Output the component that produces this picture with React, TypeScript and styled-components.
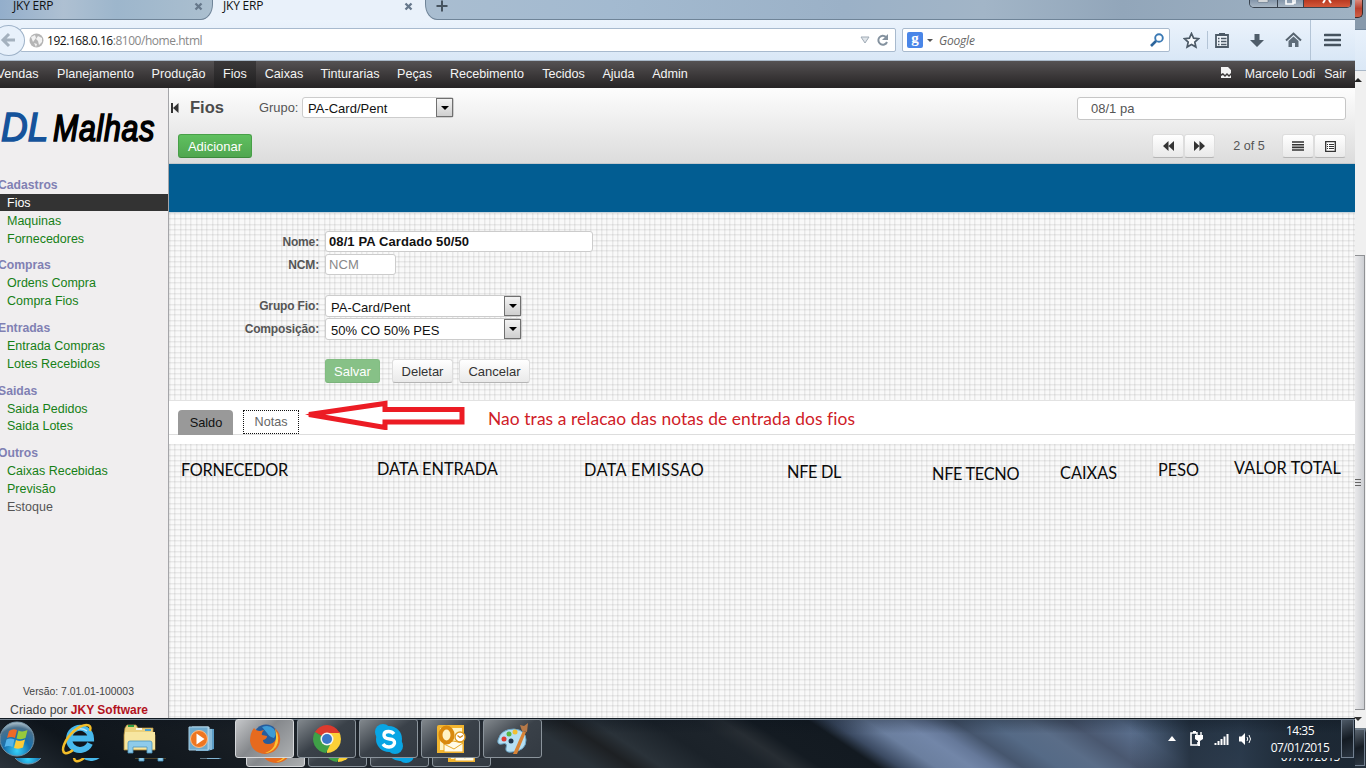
import React from "react";
import styled, { createGlobalStyle, css } from "styled-components";

const Global = createGlobalStyle`
  *{box-sizing:border-box}
  body{margin:0;overflow:hidden;background:#fff}
  #root{font-family:"Liberation Sans",Arial,sans-serif;font-size:13px;color:#444}
`;
const ui = `"Open Sans","Noto Sans",sans-serif`;

const Screen = styled.div`display:flex;width:1366px;height:768px;overflow:hidden;`;
const Window = styled.div`display:flex;flex-direction:column;width:1355px;height:768px;`;

/* browser chrome */
const TabStrip = styled.div`display:flex;height:20px;background:#e9f1fa;font:12px ${ui};color:#111;flex:none;`;
const BackTab = styled.div`
  width:213px;height:20px;display:flex;justify-content:space-between;align-items:flex-start;padding:0 9px 0 13px;
  background:linear-gradient(90deg,#93aecb,#aec0d2 30%,#9db6cc 55%,#abbfcf);
  border-right:1px solid #6f8498;border-bottom:1px solid #6f8498;border-bottom-right-radius:12px 16px;
`;
const FrontTab = styled.div`width:212px;display:flex;justify-content:space-between;align-items:flex-start;padding:0 12px 0 10px;`;
const TabTitle = styled.span`line-height:16px;margin-top:-2px;letter-spacing:-.2px;`;
const TabClose = styled.svg`width:9px;height:9px;margin-top:2px;`;
const StripRest = styled.div`
  flex:1;display:flex;justify-content:space-between;padding-left:10px;
  background:linear-gradient(90deg,#a9bdd0,#a3bad0 20%,#9bb1c7 45%,#a2b5c7 60%,#92a6ba 75%,#9fb2c3);
  border-left:1px solid #6f8498;border-bottom:1px solid #6f8498;border-bottom-left-radius:12px 16px;
`;
const WindowButtons = styled.div`
  display:flex;width:103px;height:8px;margin-right:3px;border:1px solid #39434f;border-top:0;border-radius:0 0 5px 5px;overflow:hidden;
`;
const WindowButton = styled.div<{ $w: number; $close?: boolean }>`
  width:${p => p.$w}px;display:flex;justify-content:center;border-right:1px solid #39434f;
  background:${p => (p.$close ? "linear-gradient(#b93a22,#d4583a)" : "linear-gradient(#8496aa,#a9b7c5)")};
`;
const Toolbar = styled.div`
  height:41px;flex:none;display:flex;align-items:center;background:linear-gradient(#ebf3fc,#d9e7f6);
  border-bottom:1px solid #a9b9c9;font:12px ${ui};
`;
const Back = styled.div`
  width:33px;height:31px;margin-left:-8px;border:1px solid #9eb2c8;border-radius:50%;background:#e8f1fb;display:flex;align-items:center;
  justify-content:flex-end;padding-right:8px;z-index:1;flex:none;
`;
const Address = styled.div`
  width:876px;height:24px;margin-left:-5px;padding:0 6px 0 8px;background:#fff;border:1px solid #a8bace;border-radius:2px;
  display:flex;align-items:center;color:#888;flex:none;
`;
const Url = styled.span`margin-left:3px;flex:1;letter-spacing:-.46px;b{font-weight:400;color:#111;}`;
const Search = styled.div`
  width:268px;height:24px;margin-left:6px;padding:0 5px 0 4px;background:#fff;border:1px solid #a8bace;border-radius:2px;display:flex;
  align-items:center;flex:none;
`;
const GBadge = styled.span`width:16px;height:16px;border-radius:2px;background:#4a86e8;color:#fff;font:bold 15px/13px "Liberation Serif",serif;text-align:center;`;
const SearchHint = styled.i`flex:1;margin-left:3px;color:#666;letter-spacing:-.2px;`;
const Tools = styled.div`flex:1;height:40px;display:flex;align-items:center;`;
const ToolCell = styled.div<{ $w: number; $line?: boolean }>`
  width:${p => p.$w}px;height:${p => (p.$line ? 40 : 20)}px;display:flex;align-items:center;justify-content:center;
  ${p => p.$line && css`border-left:1px solid #b3c4d6;`}
`;
const Divider = styled.div`width:1px;height:18px;background:#b3c4d6;`;

/* application */
const Nav = styled.nav`
  height:27px;flex:none;display:flex;align-items:center;background:linear-gradient(#555253,#3d3a3b 50%,#262425);color:#f4f4f4;
  font-size:12.6px;overflow:hidden;
`;
const NavItem = styled.a<{ $w: number; $on?: boolean }>`
  width:${p => p.$w}px;height:27px;line-height:26px;text-align:center;white-space:nowrap;flex:none;
  ${p => p.$on && css`background:linear-gradient(#3b393a,#1f1e1f);`}
`;
const NavUser = styled.div`margin-left:auto;display:flex;align-items:center;padding-right:9px;line-height:25px;margin-top:-1px;font-size:12.3px;span{margin-left:9px;}svg{margin:-3px 4px 0 0;}`;
const Body = styled.div`display:flex;height:630px;flex:none;`;
const Sidebar = styled.aside`width:169px;flex:none;background:#f0eeef;border-right:1px solid #a5a5a9;display:flex;flex-direction:column;overflow:hidden;`;
const Logo = styled.div`
  height:88px;flex:none;padding:17px 0 0 1px;display:flex;align-items:baseline;font:italic 700 38px/44px "Liberation Sans",sans-serif;white-space:nowrap;
`;
const LogoMark = styled.span`color:#15539b;font-size:41px;font-weight:400;-webkit-text-stroke:1.6px #15539b;transform:scaleX(.9);transform-origin:0 0;width:57px;`;
const LogoName = styled.span`color:#000;font-size:36px;font-weight:400;-webkit-text-stroke:1.7px #000;letter-spacing:.9px;transform:scaleX(.84);transform-origin:0 0;`;
const Group = styled.section`margin-bottom:9.1px;line-height:18.4px;`;
const GroupTitle = styled.div`height:17.85px;margin-left:-2px;font-weight:700;font-size:12.2px;line-height:19px;color:#8080b3;`;
const Entry = styled.div<{ $kind?: string }>`
  height:17.85px;padding-left:7px;font-size:12.5px;color:${p => (p.$kind === "off" ? "#555" : p.$kind === "on" ? "#fff" : "#168016")};
  ${p => p.$kind === "on" && css`background:linear-gradient(#333,#333) 0 0/100% 17px no-repeat;`}
`;
const SideFoot = styled.div`margin-top:auto;height:35px;padding-left:10px;font-size:12.3px;line-height:18px;b{color:#b3121d;font-size:12px;}`;
const Version = styled.div`font-size:10.4px;padding-left:13px;height:18px;line-height:17px;`;

const Main = styled.main`width:1186px;display:flex;flex-direction:column;`;
const grid = css`
  background-color:#f9f9f9;
  background-image:
    linear-gradient(90deg,#00000011 0 1px,#00000008 1px 2px,transparent 2px 5px,#00000011 5px 6px,#00000008 6px 7px,transparent 7px 11px,#00000011 11px 12px,#00000008 12px 13px,transparent 13px),
    linear-gradient(#00000011 0 1px,#00000008 1px 2px,transparent 2px 5px,#00000011 5px 6px,#00000008 6px 7px,transparent 7px 11px,#00000011 11px 12px,#00000008 12px 13px,transparent 13px);
  background-size:16px 16px;
`;
const Header = styled.header`height:76px;flex:none;background:linear-gradient(#fdfdfd,#dcdcdc);border-bottom:1px solid #c4c8cc;`;
const HeadRow = styled.div<{ $h: number; $top?: number }>`display:flex;align-items:center;height:${p => p.$h}px;margin-top:${p => p.$top || 0}px;padding:0 9px 0 2px;`;
const Title = styled.h1`margin:-1px 0 0 11px;font-size:16.5px;line-height:20px;color:#4b4b4b;width:69px;`;
const Label = styled.label`font-size:12.9px;width:43px;color:#555;`;
const Select = styled.div<{ $w: number; $h?: number }>`
  width:${p => p.$w}px;height:${p => p.$h || 22}px;background:#fff;border:1px solid #ccc;border-radius:3px;color:#111;display:flex;justify-content:space-between;
  padding-left:5px;line-height:${p => (p.$h || 22) + 1}px;font-size:13px;
`;
const Drop = styled.span`
  width:17px;height:100%;border:1px solid #707070;background:linear-gradient(#f3f3f3,#cfcfcf);display:flex;align-items:center;justify-content:center;
  &::after{content:"";border:4px solid transparent;border-top-color:#000;border-bottom:0;}
`;
const SearchField = styled.div`margin:1px 0 0 auto;width:269px;height:23px;background:#fff;border:1px solid #c6c6c6;border-radius:3px;padding-left:13px;line-height:21px;color:#555;`;
const Button = styled.button<{ $w: number; $tone?: string }>`
  width:${p => p.$w}px;height:24px;padding:0;border-radius:3px;font:13px "Liberation Sans",sans-serif;flex:none;
  display:flex;align-items:center;justify-content:center;
  color:${p => (p.$tone ? "#fff" : "#333")};
  border:1px solid ${p => (p.$tone === "green" ? "#48a048" : p.$tone === "pale" ? "#82bd82" : "#ddd")};
  border-bottom-color:${p => (p.$tone === "green" ? "#3c8a3c" : p.$tone === "pale" ? "#7cb37c" : "#b5b5b5")};
  background:${p => (p.$tone === "green" ? "linear-gradient(#5fc05f,#50a650)" : p.$tone === "pale" ? "#87c187" : "linear-gradient(#fff,#e9e9e9)")};
`;
const Count = styled.span`width:67px;text-align:center;color:#555;font-size:12.6px;padding-left:1px;`;
const Band = styled.div`height:49px;flex:none;background:#025d92;border-bottom:1px solid #c8d4dc;`;
const Form = styled.div`${grid};height:187px;flex:none;padding-top:18px;`;
const Field = styled.div<{ $gap: number }>`display:flex;height:22px;margin-bottom:${p => p.$gap}px;`;
const FieldLabel = styled.label`width:150px;margin-right:6px;text-align:right;font:bold 12px/23px "Liberation Sans",sans-serif;letter-spacing:-.15px;color:#555;`;
const Input = styled.div<{ $w: number; $hint?: boolean }>`
  width:${p => p.$w}px;height:21px;background:#fff;border:1px solid #ccc;border-radius:3px;padding-left:3px;line-height:19px;
  font-size:13px;letter-spacing:.1px;color:${p => (p.$hint ? "#888" : "#111")};font-weight:${p => (p.$hint ? 400 : 700)};
`;
const Actions = styled.div`display:flex;padding:0 0 0 156px;`;
const Space = styled.span<{ $w: number }>`width:${p => p.$w}px;`;
const TabBar = styled.div`height:44px;flex:none;background:#fff;border-top:1px solid #e2e2e2;`;
const TabRow = styled.div`height:34px;border-bottom:1px solid #ddd;display:flex;align-items:flex-end;padding-left:9px;font-size:13px;line-height:25px;text-align:center;`;
const SaldoTab = styled.div`width:55px;height:25px;background:#999;border-radius:4px 4px 0 0;color:#111;margin-bottom:-1px;padding-left:1px;font-size:12.8px;`;
const NotasTab = styled.div`width:56px;height:24px;margin-left:10px;border:1px dotted #111;line-height:23px;color:#666;background:#fff;font-size:12.6px;`;
const Arrow = styled.svg`width:166px;height:30px;margin:0 0 4px 2px;align-self:flex-end;flex:none;`;
const Remark = styled.div`margin-left:21px;font:17.4px/24px Lato,sans-serif;color:#cf2027;letter-spacing:.08px;padding-bottom:3px;white-space:nowrap;`;
const Table = styled.div`${grid};flex:1;display:flex;padding:12px 0 0 12px;font:16.3px/24px Lato,sans-serif;color:#0b0b0b;`;
const Column = styled.div<{ $w: number; $drop: number; $track: number }>`
  width:${p => p.$w}px;flex:none;padding-top:${p => p.$drop}px;white-space:nowrap;letter-spacing:${p => p.$track}px;
`;

/* taskbar */
const Taskbar = styled.footer`
  height:50px;flex:none;border-top:1px solid #111a22;box-shadow:inset 0 1px #74808c;overflow:hidden;
  background:
    linear-gradient(#0a121c55,transparent 30%),
    linear-gradient(90deg,transparent 1130px,#1c2733cc 1190px,#1c2733aa 1240px,#18222ce0 1300px),
    linear-gradient(33.7deg,#2b333b 0,#0f151b 60px,#151b21 130px,#2a3037 300px,#2a3239 330px,#1d2023 352px,#2a3239 368px,#1b2229 400px,#1d242b 425px,#272d33 440px,#141b22 456px,#131a21 488px,#3b4a62 500px,#6b7f9f 520px,#7286a8 540px,#66799a 552px,#46566e 568px,#556a86 588px,#5a6d88 610px,#4a5870 632px,#5c7190 660px,#465f7c 700px,#3d526c);
`;
const TaskRow = styled.div`display:flex;height:39px;`;
const EchoRow = styled.div`display:flex;height:10px;overflow:hidden;align-items:flex-end;padding-left:11px;`;
const IconSlot = styled.div<{ $w: number; $echo?: boolean }>`
  width:${p => p.$w}px;height:39px;display:flex;align-items:center;flex:none;
  ${p => p.$echo && css`align-self:flex-start;margin-top:-31px;`}
`;
const TaskButton = styled.div<{ $on?: boolean; $echo?: boolean }>`
  width:59px;height:39px;margin-right:3px;flex:none;display:flex;align-items:center;justify-content:center;border:1px solid ${p => (p.$on ? "#d6d8db" : "#8b949c")};
  border-radius:3px;
  background:${p => (p.$on ? "linear-gradient(135deg,#c5c7c9,#85888c 45%,#acafb1)" : "linear-gradient(145deg,#82888d,#3a4149 48%,#333a42)")};
  ${p => p.$echo && css`align-self:flex-start;margin-top:-30px;`}
`;
const Tray = styled.div`margin-left:auto;display:flex;align-items:center;height:39px;svg{flex:none;}`;
const Clock = styled.div`width:80px;margin-left:7px;text-align:center;color:#fff;font:12px/17px ${ui};letter-spacing:-.5px;padding-top:1px;`;
const Peek = styled.div`width:13px;height:39px;margin:0 1px 0 1px;border:1px solid #728090;background:linear-gradient(160deg,#4d5966,#141b23 50%,#2a3541);`;
const EchoDate = styled.span`margin-left:auto;align-self:flex-start;margin-right:15px;color:#fff;font:12px/12px ${ui};letter-spacing:-.45px;height:5px;display:flex;align-items:flex-end;overflow:hidden;`;

/* outer edge of the second window */
const Edge = styled.div`width:11px;height:768px;display:flex;flex-direction:column;flex:none;`;
const EdgeGlass = styled.div`height:30px;background:#8799ab;border-bottom:1px solid #71869b;`;
const EdgeClose = styled.div`width:8px;height:18px;background:linear-gradient(#d98a7c,#b8402e 50%,#cf5f45);border:1px solid #3b2a2a;border-left:0;border-top:0;border-radius:0 0 5px 0;`;
const EdgeBar = styled.div`height:41px;background:linear-gradient(#e8f1fb,#dbe8f6);border-bottom:1px solid #aab8c8;`;
const Scroll = styled.div`height:657px;background:#f0f0f0;display:flex;flex-direction:column;`;
const ScrollArrow = styled.div<{ $down?: boolean }>`
  height:18px;display:flex;align-items:center;&::after{content:"";border:4px solid transparent;margin-left:-1px;
  ${p => (p.$down ? "border-top-color:#333;border-bottom:0;" : "border-bottom-color:#222;border-top:0;")}}
`;
const Thumb = styled.div`
  margin-top:166px;width:10px;height:456px;border:1px solid #8f9194;border-left:0;background:linear-gradient(90deg,#e9e9eb,#cdcfd3);
  display:flex;flex-direction:column;align-items:flex-start;justify-content:center;gap:2px;
`;
const Grip = styled.i`width:6px;height:1px;background:#666;`;
const EdgeTask = styled.div`flex:1;background:linear-gradient(#7b8791,#1b232c 5px,#26313c);padding-top:1px;`;
const EdgePeek = styled.div`width:10px;height:37px;border:1px solid #728090;border-left:0;background:linear-gradient(160deg,#59636e,#161d25 50%,#2d3844);`;

const Close = () => (
  <TabClose viewBox="0 0 9 9"><path d="M1.5 1.5l6 6M7.5 1.5l-6 6" stroke="#66788b" strokeWidth="2.3" /></TabClose>
);

const Orb = () => (
  <svg width="36" height="36" viewBox="0 0 36 36">
    <defs><radialGradient id="orb" cx=".5" cy=".85" r=".85"><stop offset="0" stopColor="#36d1fa" /><stop offset=".45" stopColor="#1670ae" /><stop offset=".8" stopColor="#49708c" /><stop offset="1" stopColor="#b5c8d1" /></radialGradient></defs>
    <circle cx="17" cy="18" r="17" fill="url(#orb)" stroke="#7594a8" />
    <path d="M9 10q4-3 8-1l-2 8q-4-2-8 0z" fill="#ee6a27" /><path d="M18.500 9.500q4 2 9-.5l-2 8q-4 2-9 .5z" fill="#97c93c" />
    <path d="M6.500 18.500q4-2 8 0l-2 7.500q-4-2-8 0z" fill="#55b4ea" /><path d="M16 19q4 2 9-.5l-2 8q-4 2-9 .5z" fill="#fbcb38" />
  </svg>
);
const Explorer = () => (
  <svg width="34" height="34" viewBox="0 0 34 34">
    <path d="M29 21.500a11 11 0 1 1 1-5H11" fill="none" stroke="#48b9ec" strokeWidth="6" />
    <path d="M11 10a10 8 0 0 1 15-1" fill="none" stroke="#b5e8fb" strokeWidth="1.500" />
    <path d="M29 9c3-8-7-8-16 0S-1 29 4 31q3 1 8-3" fill="none" stroke="#f3bd29" strokeWidth="2.500" />
  </svg>
);
const Folder = () => (
  <svg width="34" height="34" viewBox="0 0 34 34">
    <path d="M2 6l2-3h9l2 3h15v4l2 3v15H1V13z" fill="#ecd27d" stroke="#b99745" strokeWidth=".7" />
    <path d="M5 3h6v2H5z" fill="#2f9e45" /><path d="M13 6h6v2h-6z" fill="#f7f7ee" /><path d="M22 7h6v2h-6z" fill="#4a9fd0" />
    <path d="M2 10h30v17H2z" fill="#f7e6a0" /><path d="M5 31V21q0-2 2-2h20q2 0 2 2v10h-5v-6H10v6z" fill="#8ecbea" stroke="#4d94bd" strokeWidth=".8" />
  </svg>
);
const Player = () => (
  <svg width="28" height="28" viewBox="0 0 28 28">
    <path d="M8 3l18 1v20l-6 2H8z" fill="#5c9cc5" /><path d="M23 4v21" stroke="#b9dcef" /><path d="M4 2h17v22H4z" fill="#86bedd" stroke="#c3e1f0" /><path d="M1 2h19v23H1z" fill="#6eaacd" stroke="#a9d0e6" />
    <circle cx="11" cy="14" r="8.500" fill="#ee7621" stroke="#fbc18c" /><path d="M8.500 8.500v11l8-5.500z" fill="#fff" />
  </svg>
);
const Firefox = () => (
  <svg width="32" height="32" viewBox="0 0 32 32">
    <circle cx="17" cy="14" r="12.500" fill="#265c9c" /><path d="M13 4q7-3 12 2 3 5 0 9-5-1-7-5z" fill="#3d9bd6" />
    <path d="M5 5q2 3 6 3l4-1q-3 3-2 5l5 1q0 3-4 4 0 4 5 4 6 0 8-5 3-6-2-11 7 4 6 13-2 12-15 13Q3 30 1 18 1 10 5 5z" fill="#e66a1e" />
    <path d="M26 6q6 9 1 18-5 6-11 6 9-3 10-10 2-6 0-14z" fill="#fcc536" />
  </svg>
);
const Chrome = () => (
  <svg width="30" height="30" viewBox="0 0 30 30">
    <path d="M15 15L2.900 8A14 14 0 0 1 27.100 8z" fill="#dc3a2d" /><path d="M15 15V8h12.100A14 14 0 0 1 15 29z" fill="#fcd037" />
    <path d="M15 15l3 6-4 8A14 14 0 0 1 2.900 8z" fill="#3fa047" /><path d="M15 8.500h12.500" stroke="#dc3a2d" strokeWidth="1" />
    <circle cx="15" cy="15" r="6.500" fill="#f5f5f0" /><circle cx="15" cy="15" r="5" fill="#3a78c8" />
  </svg>
);
const Skype = () => (
  <svg width="30" height="32" viewBox="0 0 30 32">
    <g fill="#09a5e4"><circle cx="15" cy="16" r="13" /><circle cx="9" cy="9" r="8" /><circle cx="21" cy="23" r="8" /></g>
    <path d="M20 11q-2-2.500-5.500-2.500Q10 8.500 10 12t5.500 4 5 4-5.500 4q-4 0-6-3" fill="none" stroke="#fff" strokeWidth="3.400" />
  </svg>
);
const Outlook = () => (
  <svg width="32" height="32" viewBox="0 0 32 32">
    <path d="M2 4q0-2 2-2h25v28H2z" fill="#f2b52f" /><path d="M5 5h22v22H5z" fill="#fff3c4" />
    <path d="M9 21l9-3 10 2v9H9z" fill="#fffbe8" stroke="#e6a82a" /><path d="M9 21l10 5 9-6" fill="none" stroke="#e6a82a" />
    <ellipse cx="11.500" cy="12" rx="6" ry="7.500" fill="none" stroke="#d9890e" strokeWidth="4" />
    <circle cx="25" cy="14" r="5" fill="#fff" stroke="#dc981e" strokeWidth="1.400" /><path d="M22.500 12.500l2.500 2 3-2" fill="none" stroke="#d18410" strokeWidth="1.300" />
  </svg>
);
const Paint = () => (
  <svg width="34" height="34" viewBox="0 0 34 34">
    <path d="M2 18Q5 7 18 7q12 1 12 11 0 11-14 12-7 1-6-4 2-6-4-4-5 1-4-4z" fill="#b5dff3" stroke="#6ba5c6" />
    <circle cx="8" cy="17" r="2.500" fill="#dc3b32" /><circle cx="13" cy="12" r="2.500" fill="#57b543" /><circle cx="19" cy="10" r="2.500" fill="#f2c032" /><circle cx="15" cy="19" r="2.500" fill="#20364c" />
    <path d="M17 32L27 9l3 1-9 22z" fill="#d78336" /><path d="M26 9l-2-6 4 1 4-3-1 9z" fill="#b67948" />
  </svg>
);

const NAV: [string, number][] = [
  ["Vendas", 61], ["Planejamento", 95], ["Produção", 71], ["Fios", 42], ["Caixas", 56], ["Tinturarias", 76],
  ["Peças", 53], ["Recebimento", 92], ["Tecidos", 61], ["Ajuda", 49], ["Admin", 54],
];
const MENU = [
  { title: "Cadastros", items: ["Fios", "Maquinas", "Fornecedores"] },
  { title: "Compras", items: ["Ordens Compra", "Compra Fios"] },
  { title: "Entradas", items: ["Entrada Compras", "Lotes Recebidos"] },
  { title: "Saidas", items: ["Saida Pedidos", "Saida Lotes"] },
  { title: "Outros", items: ["Caixas Recebidas", "Previsão", "Estoque"] },
];
const COLUMNS: [string, number, number, number][] = [
  ["FORNECEDOR", 196, 1, -0.3], ["DATA ENTRADA", 207, 0, 0], ["DATA EMISSAO", 203, 1, 0.4], ["NFE DL", 145, 3, -0.3],
  ["NFE TECNO", 128, 5, -0.3], ["CAIXAS", 98, 4, 0.05], ["PESO", 76, 1, 0], ["VALOR TOTAL", 110, -1, 0.15],
];
const APPS = [Firefox, Chrome, Skype, Outlook, Paint];

export default function App() {
  return (
    <>
      <Global />
      <Screen>
        <Window>
          <TabStrip>
            <BackTab><TabTitle>JKY ERP</TabTitle><Close /></BackTab>
            <FrontTab><TabTitle>JKY ERP</TabTitle><Close /></FrontTab>
            <StripRest>
              <svg width="12" height="12" viewBox="0 0 12 12"><path d="M6 .5v11M.5 6h11" stroke="#46535f" strokeWidth="2" /></svg>
              <WindowButtons>
                <WindowButton $w={28}><svg width="12" height="4"><path d="M1 0h10v2H1z" fill="#fff" stroke="#4c5966" strokeWidth=".5" /></svg></WindowButton>
                <WindowButton $w={27}><svg width="12" height="5"><path d="M1 0v4h7V0M8 3h2V0" fill="none" stroke="#fff" strokeWidth="1.600" /></svg></WindowButton>
                <WindowButton $w={47} $close><svg width="12" height="4"><path d="M2 3l2-3M10 3L8 0" stroke="#fff" strokeWidth="2" /></svg></WindowButton>
              </WindowButtons>
            </StripRest>
          </TabStrip>
          <Toolbar>
            <Back><svg width="16" height="16" viewBox="0 0 16 16"><path d="M15 8H4M9 2L3 8l6 6" fill="none" stroke="#a4b1be" strokeWidth="3" /></svg></Back>
            <Address>
              <svg width="15" height="15" viewBox="0 0 15 15"><circle cx="7.500" cy="7.500" r="7" fill="#b5b5b5" /><path d="M2 4l4-2 1 3-3 4zM9 3l4 2v4l-3 3-1-4-2-2zM5 10l3 1-1 3z" fill="#f2f2f2" /></svg>
              <Url><b>192.168.0.16</b>:8100/home.html</Url>
              <svg width="10" height="8" viewBox="0 0 10 8"><path d="M1 1h8L5 7z" fill="#dfe4e9" stroke="#a0abb6" /></svg>
              <svg width="13" height="13" viewBox="0 0 13 13" style={{ marginLeft: 6 }}><path d="M10 3a4.500 4.500 0 1 0 1 5" fill="none" stroke="#84929f" strokeWidth="2" /><path d="M12 0v6H6z" fill="#84929f" /></svg>
            </Address>
            <Search>
              <GBadge>g</GBadge>
              <svg width="13" height="5" viewBox="0 0 13 5"><path d="M4 1h6L7 4z" fill="#555" /></svg>
              <SearchHint>Google</SearchHint>
              <svg width="14" height="14" viewBox="0 0 14 14"><circle cx="9" cy="5" r="3.800" fill="none" stroke="#3a79b4" strokeWidth="1.900" /><path d="M6 8l-5 5" stroke="#2d659c" strokeWidth="2.600" /></svg>
            </Search>
            <Tools>
              <ToolCell $w={32} style={{ marginLeft: 5 }}>
                <svg width="17" height="17" viewBox="0 0 17 17"><path d="M8.500 1.500l2.100 4.700 5 .5-3.800 3.400 1.100 5-4.400-2.600-4.400 2.600 1.100-5L1.400 6.700l5-.5z" fill="#f7fbff" stroke="#4c5a67" strokeWidth="1.700" /></svg>
              </ToolCell>
              <Divider />
              <ToolCell $w={28}>
                <svg width="16" height="16" viewBox="0 0 16 16"><path d="M2 3h12v12H2z" fill="#eef4fa" stroke="#4c5a67" strokeWidth="1.800" /><path d="M5 1h6v3H5z" fill="#4c5a67" /><path d="M4 6.500h1.500M7 6.500h5.500M4 9.500h1.500M7 9.500h5.500M4 12.500h1.500M7 12.500h5.500" stroke="#4c5a67" strokeWidth="1.500" /></svg>
              </ToolCell>
              <ToolCell $w={42}><svg width="14" height="15" viewBox="0 0 14 15"><path d="M4.500 1h5v6H14l-7 7-7-7h4.500z" fill="#4f5d6a" /></svg></ToolCell>
              <ToolCell $w={30}><svg width="17" height="16" viewBox="0 0 17 16"><path d="M1 8.500L8.500 1.500 16 8.500" fill="none" stroke="#56636f" strokeWidth="2" /><path d="M3.500 9l5-4.500 5 4.500v6H10v-4H7v4H3.500z" fill="#5e6c79" /></svg></ToolCell>
              <ToolCell $w={43} $line style={{ marginLeft: 2 }}><svg width="17" height="14" viewBox="0 0 17 14"><path d="M1 2h15M1 7h15M1 12h15" stroke="#46535f" strokeWidth="2.600" strokeLinecap="round" /></svg></ToolCell>
            </Tools>
          </Toolbar>
          <Nav>
            {NAV.map(([name, w], i) => <NavItem key={name} $w={w} $on={name === "Fios"} style={i === 0 ? { marginLeft: -13 } : undefined}>{name}</NavItem>)}
            <NavUser>
              <svg width="12" height="12" viewBox="0 0 12 12"><path d="M1 0h7l3 3v3L9 8 7 6 5 8 3 6 1 7zM1 9l2-1 2 2 2-2 2 2 2-2v3H1z" fill="#f3f3f3" /></svg>
              <span>Marcelo Lodi</span><span>Sair</span>
            </NavUser>
          </Nav>
          <Body>
            <Sidebar>
              <Logo><LogoMark>DL</LogoMark><LogoName>Malhas</LogoName></Logo>
              {MENU.map(g => (
                <Group key={g.title}>
                  <GroupTitle>{g.title}</GroupTitle>
                  {g.items.map(t => <Entry key={t} $kind={t === "Fios" ? "on" : t === "Estoque" ? "off" : undefined}>{t}</Entry>)}
                </Group>
              ))}
              <SideFoot><Version>Versão: 7.01.01-100003</Version>Criado por <b>JKY Software</b></SideFoot>
            </Sidebar>
            <Main>
              <Header>
                <HeadRow $h={39}>
                  <svg width="8" height="10" viewBox="0 0 8 10"><path d="M1 0v10" stroke="#333" strokeWidth="2" /><path d="M7.500 0v10L2 5z" fill="#333" /></svg>
                  <Title>Fios</Title><Label>Grupo:</Label>
                  <Select $w={152} $h={21}>PA-Card/Pent<Drop /></Select>
                  <SearchField>08/1 pa</SearchField>
                </HeadRow>
                <HeadRow $h={24} $top={7}>
                  <Space $w={7} /><Button $w={74} $tone="green">Adicionar</Button>
                  <Space $w={0} style={{ marginLeft: "auto" }} />
                  <Button $w={32}><svg width="11" height="10" viewBox="0 0 11 10"><path d="M5.500 0v10L0 5zM11 0v10L5.500 5z" fill="#333" /></svg></Button>
                  <Button $w={31}><svg width="11" height="10" viewBox="0 0 11 10"><path d="M0 0v10l5.500-5zM5.500 0v10L11 5z" fill="#333" /></svg></Button>
                  <Count>2 of 5</Count>
                  <Button $w={32}><svg width="12" height="10" viewBox="0 0 12 10"><path d="M0 1h12M0 3.700h12M0 6.400h12M0 9h12" stroke="#333" strokeWidth="1.600" /></svg></Button>
                  <Button $w={32}><svg width="11" height="11" viewBox="0 0 11 11"><path d="M.7.7h9.600v9.600H.7z" fill="#fff" stroke="#333" strokeWidth="1.300" /><path d="M2 3.500h1M4 3.500h5M2 5.500h1M4 5.500h5M2 7.500h1M4 7.500h5" stroke="#333" /></svg></Button>
                </HeadRow>
              </Header>
              <Band />
              <Form>
                <Field $gap={1}><FieldLabel>Nome:</FieldLabel><Input $w={268}>08/1 PA Cardado 50/50</Input></Field>
                <Field $gap={19}><FieldLabel>NCM:</FieldLabel><Input $w={71} $hint>NCM</Input></Field>
                <Field $gap={1}><FieldLabel>Grupo Fio:</FieldLabel><Select $w={197}>PA-Card/Pent<Drop /></Select></Field>
                <Field $gap={19}><FieldLabel>Composição:</FieldLabel><Select $w={197}>50% CO 50% PES<Drop /></Select></Field>
                <Actions>
                  <Button $w={55} $tone="pale">Salvar</Button><Space $w={12} /><Button $w={61}>Deletar</Button><Space $w={6} /><Button $w={71}>Cancelar</Button>
                </Actions>
              </Form>
              <TabBar>
                <TabRow>
                  <SaldoTab>Saldo</SaldoTab><NotasTab>Notas</NotasTab>
                  <Arrow viewBox="0 0 166 30"><path d="M8 14.500L84 3.500v6h77v12.500H84v5.500z" fill="#fff" stroke="#ec1c24" strokeWidth="5" /><path d="M4 14.500L20 11v7z" fill="#ec1c24" /></Arrow>
                  <Remark>Nao tras a relacao das notas de entrada dos fios</Remark>
                </TabRow>
              </TabBar>
              <Table>{COLUMNS.map(([t, w, d, k]) => <Column key={t} $w={w} $drop={d + 1} $track={k}>{t}</Column>)}</Table>
            </Main>
          </Body>
          <Taskbar>
            <TaskRow>
              <IconSlot $w={61}><Orb /></IconSlot><IconSlot $w={62}><Explorer /></IconSlot><IconSlot $w={65}><Folder /></IconSlot><IconSlot $w={47}><Player /></IconSlot>
              {APPS.map((Icon, i) => <TaskButton key={i} $on={i === 0}><Icon /></TaskButton>)}
              <Tray>
                <svg width="8" height="5" viewBox="0 0 8 5"><path d="M0 5l4-5 4 5z" fill="#fff" /></svg>
                <svg width="15" height="16" viewBox="0 0 15 16" style={{ marginLeft: 13 }}><path d="M8 2H2v12h7v-3" fill="none" stroke="#fff" strokeWidth="1.600" /><path d="M4 1h3" stroke="#fff" strokeWidth="2" /><path d="M8 1v4M12 1v4" stroke="#fff" strokeWidth="1.400" /><path d="M6 4h8v4l-3 2v5H9v-5L6 8z" fill="#fff" /></svg>
                <svg width="15" height="12" viewBox="0 0 15 12" style={{ marginLeft: 10 }}><path d="M1.500 12v-2M4.500 12V8M7.500 12V6M10.500 12V3.500M13.500 12V1" stroke="#fff" strokeWidth="2" /></svg>
                <svg width="15" height="14" viewBox="0 0 15 14" style={{ marginLeft: 9 }}><path d="M1 4.500h2.500L7 1v12L3.500 9.500H1z" fill="#fff" /><path d="M9 5q1.500 2 0 4M11 3q3 4 0 8" fill="none" stroke="#fff" /></svg>
                <Clock>14:35<br />07/01/2015</Clock>
                <Peek />
              </Tray>
            </TaskRow>
            <EchoRow>
              <IconSlot $w={61} $echo><Orb /></IconSlot><IconSlot $w={62} $echo><Explorer /></IconSlot><IconSlot $w={65} $echo><Folder /></IconSlot><IconSlot $w={47} $echo><Player /></IconSlot>
              {APPS.slice(0, 4).map((Icon, i) => <TaskButton key={i} $on={i === 0} $echo><Icon /></TaskButton>)}
              <EchoDate>07/01/2015</EchoDate>
            </EchoRow>
          </Taskbar>
        </Window>
        <Edge>
          <EdgeGlass><EdgeClose /></EdgeGlass>
          <EdgeBar />
          <Scroll>
            <ScrollArrow />
            <Thumb><Grip /><Grip /><Grip /></Thumb>
            <ScrollArrow $down />
          </Scroll>
          <EdgeTask><EdgePeek /></EdgeTask>
        </Edge>
      </Screen>
    </>
  );
}
